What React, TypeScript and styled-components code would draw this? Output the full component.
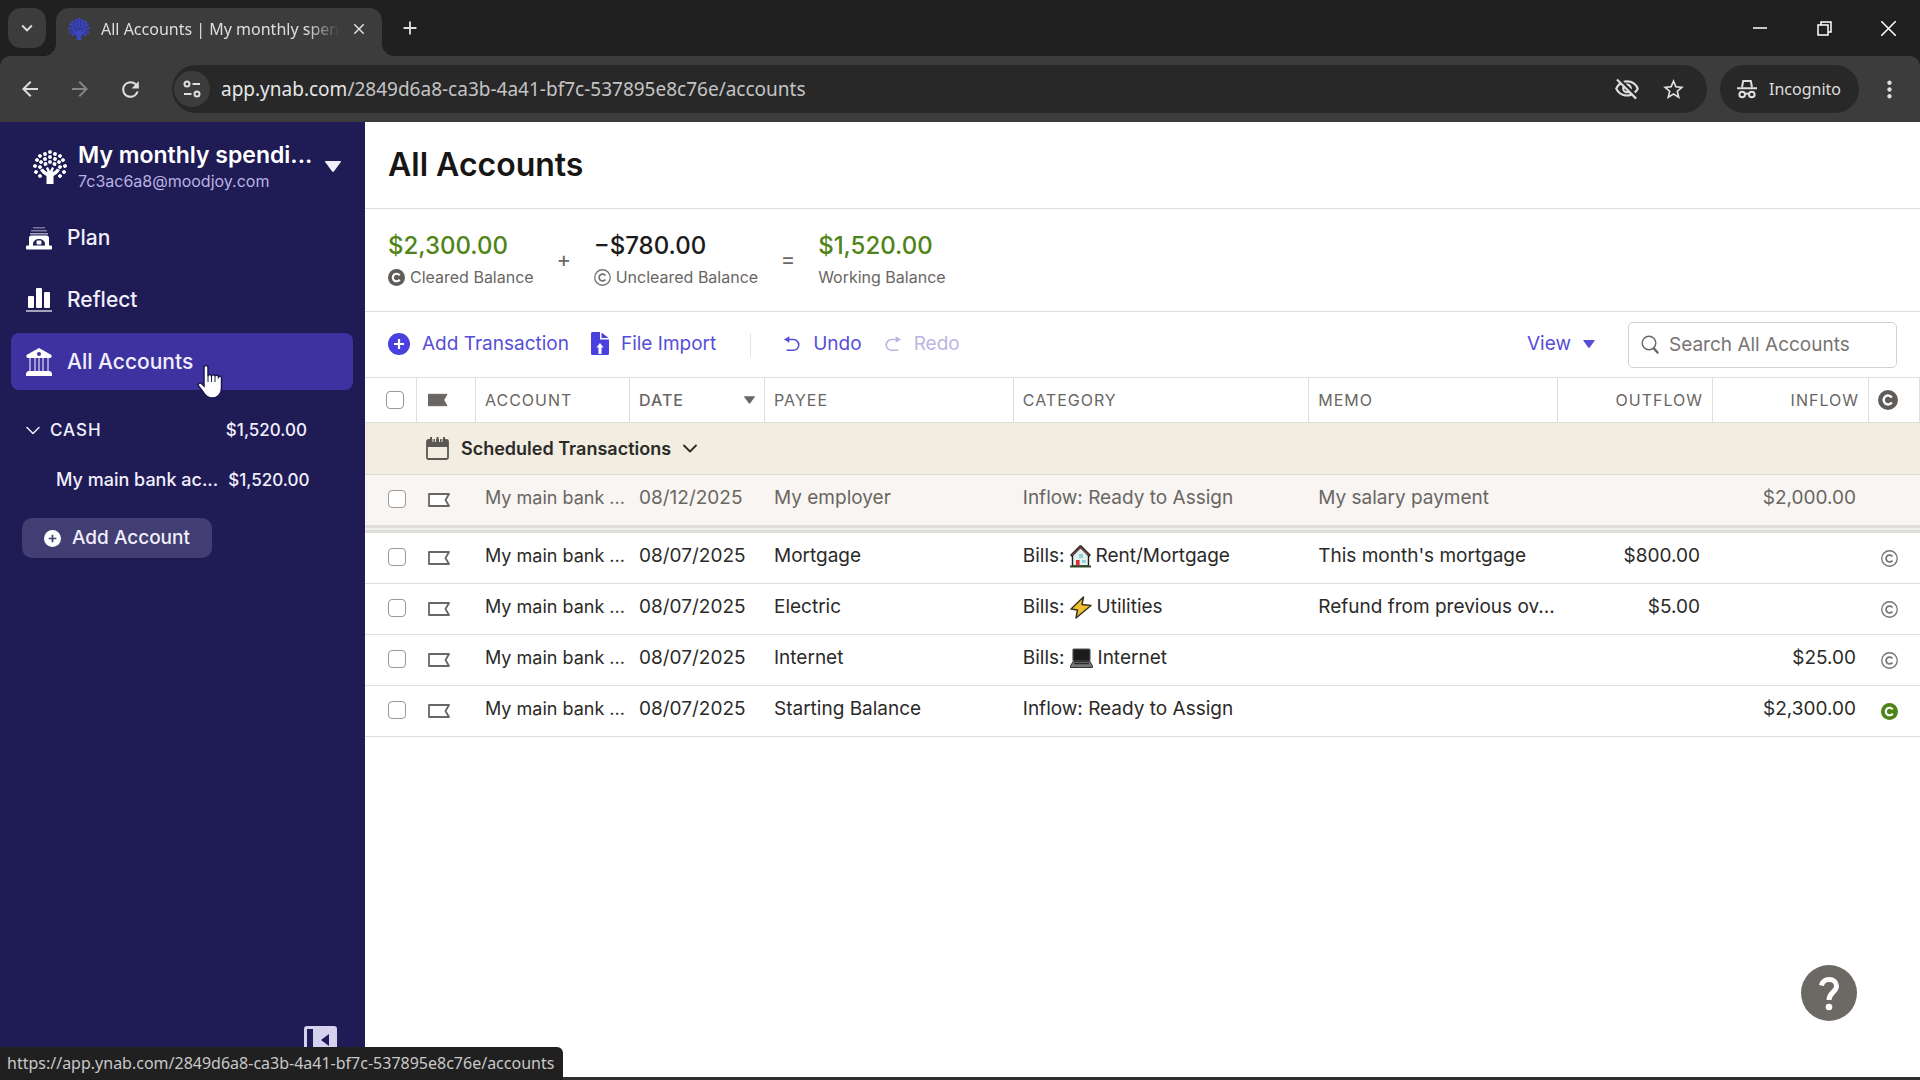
import React from "react";
import styled, { createGlobalStyle } from "styled-components";
import {
  MdAdd,
  MdArrowBack,
  MdArrowForward,
  MdClose,
  MdExpandMore,
  MdMoreVert,
  MdOutlineVisibilityOff,
  MdRefresh,
  MdStarOutline,
} from "react-icons/md";

const color = {
  strip: "#202020",
  chrome: "#3c3c3c",
  pill: "#282828",
  chromeText: "#dedede",
  navy: "#1f1b55",
  navyActive: "#3e32a0",
  lavender: "#b9b2e2",
  link: "#564ed6",
  linkIcon: "#4a40e0",
  ink: "#2b2a28",
  muted: "#696663",
  line: "#dfdedd",
  green: "#4f8518",
};

const appFont = `Inter, "Noto Sans", sans-serif`;
const chromeFont = `"Noto Sans", "Open Sans", sans-serif`;

const GlobalStyle = createGlobalStyle`
  *, *::before, *::after { box-sizing: border-box; }
  body { margin: 0; background: #fff; font-family: ${appFont}; color: ${color.ink}; }
  button, input { font: inherit; color: inherit; margin: 0; }
  button { background: none; border: 0; padding: 0; cursor: pointer; }
  a { color: inherit; text-decoration: none; }
  svg { display: block; flex: none; }
`;

/* ---------- window ---------- */

const Window = styled.div`
  display: flex;
  flex-direction: column;
  height: 100vh;
  overflow: hidden;
`;

const TabStrip = styled.header`
  display: flex;
  align-items: flex-start;
  height: 56px;
  padding: 8px 0 0 8px;
  background: ${color.strip};
  color: ${color.chromeText};
  font-family: ${chromeFont};
`;

const TabMenuButton = styled.button`
  display: grid;
  place-items: center;
  width: 38px;
  height: 40px;
  border-radius: 13px;
  background: ${color.chrome};
`;

const Tab = styled.div`
  position: relative;
  display: flex;
  align-items: center;
  width: 326px;
  height: 48px;
  margin-left: 10px;
  padding: 0 14px 6px 12px;
  border-radius: 13px 13px 0 0;
  background: ${color.chrome};

  &::before,
  &::after {
    content: "";
    position: absolute;
    bottom: 0;
    width: 12px;
    height: 12px;
  }
  &::before {
    left: -12px;
    background: radial-gradient(circle at 0 0, transparent 12px, ${color.chrome} 12px);
  }
  &::after {
    right: -12px;
    background: radial-gradient(circle at 100% 0, transparent 12px, ${color.chrome} 12px);
  }
`;

const TabTitle = styled.span`
  flex: 1;
  margin: 0 6px 0 11px;
  white-space: nowrap;
  font-size: 16px;
  line-height: 24px;
  mask-image: linear-gradient(to right, #000 85%, transparent 98%);
`;

const StripButton = styled.button`
  display: grid;
  place-items: center;
  height: 40px;
  width: 56px;
`;

const WindowControls = styled.div`
  display: flex;
  margin-left: auto;
`;

const WindowButton = styled.button`
  display: grid;
  place-items: center;
  width: 64px;
  height: 40px;
`;

const AddressBar = styled.div`
  background: ${color.strip};
`;

const AddressBarInner = styled.div`
  display: flex;
  align-items: center;
  height: 66px;
  padding: 0 13px 0 5px;
  border-radius: 10px 10px 0 0;
  background: ${color.chrome};
  color: ${color.chromeText};
  font-family: ${chromeFont};
`;

const NavButton = styled.button<{ $dim?: boolean }>`
  display: grid;
  place-items: center;
  width: 50px;
  height: 40px;
  opacity: ${(p) => (p.$dim ? 0.45 : 1)};
`;

const UrlPill = styled.div`
  flex: 1;
  display: flex;
  align-items: center;
  gap: 21px;
  height: 48px;
  margin-left: 17px;
  padding: 0 21px 0 2px;
  border-radius: 24px;
  background: ${color.pill};
`;

const SiteInfo = styled.button`
  display: grid;
  place-items: center;
  width: 36px;
  height: 36px;
  border-radius: 50%;
  background: ${color.chrome};
`;

const Url = styled.span`
  flex: 1;
  margin-left: -10px;
  font-size: 19px;
  line-height: 28px;
  color: #c4c4c4;

  b {
    font-weight: 400;
    color: #e6e6e6;
  }
`;

const Incognito = styled.button`
  display: flex;
  align-items: center;
  gap: 12px;
  height: 48px;
  margin: 0 12px 0 13px;
  padding: 0 18px 0 17px;
  border-radius: 24px;
  background: ${color.pill};
  font-size: 16px;
`;

const MenuButton = styled.button`
  display: grid;
  place-items: center;
  width: 36px;
  height: 40px;
`;

/* ---------- sidebar ---------- */

const Body = styled.div`
  flex: 1;
  display: flex;
  min-height: 0;
  border-bottom: 3px solid #2d2d2d;
`;

const Sidebar = styled.aside`
  flex: none;
  display: flex;
  flex-direction: column;
  width: 365px;
  background: ${color.navy};
  color: #f1effc;
`;

const BudgetButton = styled.button`
  display: flex;
  align-items: center;
  gap: 11px;
  height: 87px;
  padding: 2px 24px 0 33px;
  text-align: left;
`;

const BudgetText = styled.span`
  flex: 1;
  display: flex;
  flex-direction: column;
  white-space: nowrap;
`;

const BudgetName = styled.span`
  font-size: 23px;
  line-height: 28px;
  font-weight: 600;
  color: #fff;
`;

const BudgetEmail = styled.span`
  font-size: 16px;
  line-height: 24px;
  color: ${color.lavender};
`;

const Nav = styled.nav`
  display: flex;
  flex-direction: column;
  gap: 5px;
  padding: 0 12px 0 11px;
`;

const NavLink = styled.a<{ $active?: boolean }>`
  display: flex;
  align-items: center;
  gap: 15px;
  height: 57px;
  padding: 0 15px;
  border-radius: 8px;
  background: ${(p) => (p.$active ? color.navyActive : "transparent")};
  font-size: 21px;
  line-height: 28px;
  font-weight: 500;
`;

const AccountGroup = styled.div`
  display: flex;
  flex-direction: column;
  padding: 15px 58px 0 26px;
`;

const AccountRow = styled.a<{ $child?: boolean }>`
  display: flex;
  align-items: center;
  gap: 10px;
  height: 50px;
  padding-left: ${(p) => (p.$child ? 30 : 0)}px;
  font-size: 18px;
  line-height: 24px;
  font-weight: 500;
  white-space: nowrap;
`;

const GroupName = styled.span`
  font-size: 17px;
  letter-spacing: 1px;
`;

const Amount = styled.span`
  margin-left: auto;
  font-size: 17px;
`;

const AddAccount = styled.button`
  display: flex;
  align-items: center;
  align-self: flex-start;
  gap: 11px;
  height: 40px;
  margin: 13px 0 0 22px;
  padding: 0 22px;
  border-radius: 10px;
  background: #423d72;
  font-size: 19px;
  line-height: 24px;
  font-weight: 500;
`;

const CollapseButton = styled.button`
  align-self: flex-end;
  margin: auto 28px 18px 0;
`;

/* ---------- content ---------- */

const Content = styled.main`
  flex: 1;
  min-width: 0;
  display: flex;
  flex-direction: column;
`;

const TitleBar = styled.div`
  display: flex;
  align-items: center;
  height: 87px;
  padding: 0 23px;
  border-bottom: 1px solid ${color.line};
`;

const Title = styled.h1`
  margin: 0;
  font-size: 32px;
  line-height: 40px;
  font-weight: 600;
  color: #171615;
`;

const Balances = styled.section`
  display: flex;
  align-items: center;
  height: 103px;
  padding: 0 23px;
  border-bottom: 1px solid ${color.line};
`;

const Balance = styled.div`
  display: flex;
  flex-direction: column;
  gap: 4px;
`;

const BalanceAmount = styled.span<{ $positive?: boolean }>`
  font-size: 24px;
  line-height: 30px;
  font-weight: 500;
  color: ${(p) => (p.$positive ? color.green : "#1c1b1a")};
`;

const BalanceLabel = styled.span`
  display: flex;
  align-items: center;
  gap: 5px;
  font-size: 16px;
  line-height: 24px;
  color: ${color.muted};
`;

const Operator = styled.span`
  width: 60px;
  padding-bottom: 3px;
  text-align: center;
  font-size: 22px;
  line-height: 28px;
  color: ${color.muted};
`;

const Toolbar = styled.div`
  display: flex;
  align-items: center;
  height: 65px;
  padding: 0 23px;
  color: ${color.link};
  font-size: 19px;
  line-height: 24px;
`;

const ToolButton = styled.button<{ $space: number }>`
  display: flex;
  align-items: center;
  gap: 12px;
  margin: 0 ${(p) => p.$space}px 2px 0;

  &:disabled {
    color: #b9b6e2;
  }
`;

const Divider = styled.span`
  width: 1px;
  height: 24px;
  margin-right: 32px;
  background: #e4e3e2;
`;

const ViewButton = styled.button`
  display: flex;
  align-items: center;
  gap: 12px;
  margin: 0 33px 2px auto;
`;

const SearchBox = styled.label`
  display: flex;
  align-items: center;
  gap: 10px;
  width: 269px;
  height: 46px;
  padding: 0 12px;
  border: 1px solid #d3d1cf;
  border-radius: 5px;
  color: ${color.muted};

  input {
    flex: 1;
    min-width: 0;
    border: 0;
    padding: 0;
    outline: 0;
    background: none;
  }
  input::placeholder {
    color: #777471;
    opacity: 1;
  }
`;

/* ---------- register ---------- */

const Register = styled.table`
  width: 100%;
  table-layout: fixed;
  border-collapse: separate;
  border-spacing: 0;
  font-size: 19px;
  line-height: 24px;
`;

const HeadCell = styled.th<{ $right?: boolean; $sorted?: boolean }>`
  height: 46px;
  padding: 0 9px;
  border: 1px solid ${color.line};
  border-left: 0;
  text-align: ${(p) => (p.$right ? "right" : "left")};
  font-size: 16px;
  font-weight: ${(p) => (p.$sorted ? 500 : 400)};
  letter-spacing: 1px;
  color: ${color.muted};
  white-space: nowrap;
`;

const HeadFlagCell = styled(HeadCell)`
  padding-left: 11px;
`;

const SortButton = styled.button`
  display: flex;
  align-items: center;
  justify-content: space-between;
  width: 100%;
  letter-spacing: inherit;
`;

const Row = styled.tr<{ $scheduled?: boolean }>`
  background: ${(p) => (p.$scheduled ? "#f8f5f2" : "#fff")};
  color: ${(p) => (p.$scheduled ? color.muted : color.ink)};
`;

const Cell = styled.td<{ $right?: boolean; $plain?: boolean }>`
  height: ${(p) => (p.$plain ? 50 : 51)}px;
  padding: 0 ${(p) => (p.$right ? 13 : 0)}px 4px 9px;
  border-bottom: ${(p) => (p.$plain ? "0" : `1px solid ${color.line}`)};
  text-align: ${(p) => (p.$right ? "right" : "left")};
  white-space: nowrap;
`;

const AccountCell = styled(Cell)`
  font-size: 18px;
`;

const IconCell = styled(Cell)`
  padding: 0 0 0 11px;

  button {
    display: block;
    padding-left: 1px;
  }
`;

const CheckCell = styled(Cell)`
  padding: 0 0 2px 23px;
`;

const Checkbox = styled.input`
  appearance: none;
  display: block;
  width: 18px;
  height: 18px;
  border: 1px solid #9b9895;
  border-radius: 4px;
  background: #fff;
`;

const HeadCheckbox = styled(Checkbox)`
  margin-left: 12px;
`;

const SectionCell = styled.th`
  height: 52px;
  padding: 0 0 0 61px;
  border-bottom: 1px solid #e0dccf;
  background: #f1ede0;
  text-align: left;
`;

const SectionButton = styled.button`
  display: flex;
  align-items: center;
  gap: 12px;
  font-weight: 600;
  font-size: 18px;
`;

const SeparatorCell = styled.td`
  height: 8px;
  padding: 0;
  border: solid #e0dedb;
  border-width: 3px 0;
  background: #f0efed;
`;

const Category = styled.span`
  display: flex;
  align-items: center;
  gap: 5px;
`;

/* ---------- overlays ---------- */

const HelpButton = styled.button`
  position: fixed;
  right: 63px;
  bottom: 59px;
`;

const StatusBubble = styled.div`
  position: fixed;
  left: 0;
  bottom: 0;
  height: 33px;
  padding: 4px 9px 0 7px;
  border-radius: 0 6px 0 0;
  background: #202020;
  color: #c9c9c9;
  font-family: ${chromeFont};
  font-size: 16px;
  line-height: 24px;
`;

const Pointer = styled.svg`
  position: fixed;
  left: 196px;
  top: 364px;
`;

/* ---------- drawings ---------- */

const leaves: [number, number][] = [
  [17, 2], [12, 4], [22, 4], [7, 6], [27, 6], [17, 7], [4, 10], [12, 9], [22, 9], [30, 10],
  [8, 12], [26, 12], [17, 12], [2, 16], [12.5, 14], [21.5, 14], [32, 16],
  [3, 22], [7, 17], [27, 17], [31, 22], [7, 26], [27, 26],
];

const TreeIcon = ({ size = 34, fill = "#fff", crown }: { size?: number; fill?: string; crown?: string }) => (
  <svg width={size} height={size} viewBox="0 0 34 34" fill={fill} aria-hidden>
    {crown && <circle cx="17" cy="15" r="14" fill={crown} />}
    {leaves.map(([x, y]) => (
      <rect key={`${x}-${y}`} x={x - 1.8} y={y - 1.8} width="3.600" height="3.600" rx="1.200" transform={`rotate(${(x - 17) * 4} ${x} ${y})`} />
    ))}
    <path d="M13.500 34v-8c-2-1-5-3-6.500-6l3-1.500c1.500 2 3.500 3.500 4.500 3.500l-1.500-4 2-1 2 4 2-4 2 1-1.500 4c1 0 3-1.500 4.500-3.500l3 1.500c-1.500 3-4.500 5-6.500 6v8z" />
  </svg>
);

const PlanIcon = () => (
  <svg width="26" height="26" viewBox="0 0 26 26" fill="#fff" aria-hidden>
    <rect x="7" y="2" width="12" height="1.500" opacity=".4" />
    <rect x="5" y="5" width="16" height="1.500" opacity=".45" />
    <rect x="4" y="8" width="18" height="1.500" opacity=".6" />
    <path d="M3 21v-8a2.500 2.500 0 0 1 2.500-2.500h15A2.500 2.500 0 0 1 23 13v8h-4v-2a6 5 0 0 0-12 0v2z" />
    <rect x="10.500" y="15.500" width="5" height="4" rx="1" />
    <rect y="20.500" width="26" height="4" rx="1" />
  </svg>
);

const ReflectIcon = () => (
  <svg width="26" height="26" viewBox="0 0 26 26" fill="#fff" aria-hidden>
    <rect x="2" y="9" width="6" height="12" rx="1" />
    <rect x="10" y="1" width="6" height="20" rx="1" />
    <rect x="18" y="5" width="6" height="16" rx="1" />
    <rect y="23" width="26" height="2" opacity=".6" />
  </svg>
);

const BankIcon = () => (
  <svg width="26" height="28" viewBox="0 0 26 28" fill="#fff" aria-hidden>
    <path fillRule="evenodd" d="M13 0 25.500 7q.5 3-1.500 3H2Q0 10 .5 7zM13 4a2 2 0 1 0 0 4 2 2 0 0 0 0-4z" />
    {[3, 8, 12, 16, 21].map((x) => (
      <rect key={x} x={x} y="10" width="2" height="13" opacity=".5" />
    ))}
    <path d="M2 23h22l2 2v3H0v-3z" />
  </svg>
);

const PlusCircle = ({ size, fill, cross }: { size: number; fill: string; cross: string }) => (
  <svg width={size} height={size} viewBox="0 0 22 22" aria-hidden>
    <circle cx="11" cy="11" r="11" fill={fill} />
    <path d="M11 6v10M6 11h10" stroke={cross} strokeWidth="2.200" />
  </svg>
);

const Caret = ({ width, height }: { width: number; height: number }) => (
  <svg width={width} height={height} viewBox="0 0 16 11" fill="currentColor" aria-hidden>
    <path d="M1 0h14q1.500 0 .7 1.200L9 10.300q-1 1.200-2 0L.3 1.200Q-.5 0 1 0z" />
  </svg>
);

const Chevron = ({ width, thick = 1.8 }: { width: number; thick?: number }) => (
  <svg width={width} height={(width * 9) / 14} viewBox="0 0 14 9" fill="none" stroke="currentColor" strokeWidth={thick} aria-hidden>
    <path d="m1 1.500 6 6 6-6" strokeLinecap="round" strokeLinejoin="round" />
  </svg>
);

const ClearedIcon = ({ size = 17, fill = "#5f5c59" }: { size?: number; fill?: string }) => (
  <svg width={size} height={size} viewBox="0 0 18 18" aria-hidden>
    <circle cx="9" cy="9" r="9" fill={fill} />
    <path d="M12.400 6.800A4 4 0 1 0 12.400 11.200" fill="none" stroke="#fff" strokeWidth="2.200" />
  </svg>
);

const UnclearedIcon = ({ size = 17 }: { size?: number }) => (
  <svg width={size} height={size} viewBox="0 0 18 18" fill="none" stroke="#77736f" aria-hidden>
    <circle cx="9" cy="9" r="8.200" strokeWidth="1.400" />
    <path d="M12 7A3.600 3.600 0 1 0 12 11" strokeWidth="1.900" />
  </svg>
);

const FlagIcon = ({ solid }: { solid?: boolean }) => (
  <svg
    width={solid ? 20 : 23}
    height={solid ? 14 : 16}
    viewBox={solid ? "1 1 21 14" : "0 0 23 16"}
    fill={solid ? color.muted : "#fff"}
    stroke={color.muted}
    strokeWidth={solid ? 1 : 1.8}
    aria-hidden
  >
    <path d="M1 2h20l-3.500 6 3.500 6H1z" strokeLinejoin="round" />
  </svg>
);

const FileIcon = () => (
  <svg width="18" height="23" viewBox="0 0 18 23" fill={color.linkIcon} aria-hidden>
    <path d="M1.500 0H9v7.500h9V21.500a1.500 1.500 0 0 1-1.500 1.500h-15A1.500 1.500 0 0 1 0 21.500v-20A1.500 1.500 0 0 1 1.500 0z" />
    <path d="M10.500.5 17.500 6h-7z" />
    <path d="m9 11 3.500 4.500h-2V22h-3v-6.500h-2z" fill="#fff" />
  </svg>
);

const TurnIcon = ({ flip }: { flip?: boolean }) => (
  <svg width="18" height="18" viewBox="0 0 18 20" aria-hidden>
    <g transform={flip ? "matrix(-1 0 0 1 18 0)" : undefined}>
      <path d="M3 5h7.500a6 6 0 0 1 0 12H3" fill="none" stroke="currentColor" strokeWidth="1.800" />
      <path d="M6 1.500v7L0 5z" fill="currentColor" />
    </g>
  </svg>
);

const SearchIcon = () => (
  <svg width="18" height="19" viewBox="0 0 18 19" fill="none" stroke="currentColor" aria-hidden>
    <circle cx="8" cy="8" r="6.800" strokeWidth="1.400" />
    <path d="m13 13.500 3.500 4" strokeWidth="2.400" strokeLinecap="round" />
  </svg>
);

const CalendarIcon = () => (
  <svg width="23" height="23" viewBox="0 0 23 23" aria-hidden>
    <path d="M1 3h21v7H1z" fill="#5b5853" />
    <rect x="1" y="3" width="21" height="19" rx="1.500" fill="none" stroke="#5b5853" strokeWidth="1.800" />
    <path d="M5 0v5M11.500 0v5M18 0v5" stroke="#5b5853" strokeWidth="2" />
    <path d="M7 2v3M13.500 2v3M16 2v3M9.500 2v3" stroke="#f1ede0" strokeWidth="1" />
  </svg>
);

const HouseIcon = () => (
  <svg width="21" height="23" viewBox="0 0 21 23" aria-hidden>
    <path d="M2.500 9.500 10.500 2l8 7.500V21h-16z" fill="#e3f1ee" stroke="#23211f" strokeWidth="1.400" />
    <path d="M1 11 10.500 1.500 20 11" fill="none" stroke="#23211f" strokeWidth="2.800" strokeLinejoin="round" />
    <path d="M2 10.200 10.500 2 19 10.200" fill="none" stroke="#d8576b" strokeWidth=".9" />
    <rect x="6" y="15" width="3.600" height="6" fill="#d3303a" />
    <rect x="9" y="9" width="4" height="4" fill="#8fd0d8" />
    <rect x="12" y="15" width="3.600" height="3" fill="#8fd0d8" />
    <path d="M0 21.500h21" stroke="#2e4a2a" strokeWidth="2" />
  </svg>
);

const BoltIcon = () => (
  <svg width="22" height="23" viewBox="0 0 22 23" aria-hidden>
    <path d="M13.500 1 1 13l6.500 1-1.500 8L21 9.500 12 8.500z" fill="#eebf2e" stroke="#3a3320" strokeWidth="1.500" strokeLinejoin="round" />
  </svg>
);

const LaptopIcon = () => (
  <svg width="23" height="20" viewBox="0 0 23 20" aria-hidden>
    <rect x="3" y="1" width="17" height="12" rx="1" fill="#1b1b1b" stroke="#555" strokeWidth="1.200" />
    <path d="M3 13.500h17l2.500 4.500v1.500H.5V18z" fill="#77777a" stroke="#333" strokeWidth="1" />
    <path d="M4 15.500h15" stroke="#2a2a2a" strokeWidth="1.500" />
  </svg>
);

const CollapseIcon = () => (
  <svg width="33" height="33" viewBox="0 0 33 33" aria-hidden>
    <rect width="33" height="33" rx="3" fill="#d6d1ee" />
    <rect x="3" y="3" width="6" height="27" fill={color.navy} />
    <path d="M25 8v12l-8-6z" fill={color.navy} />
  </svg>
);

const TuneIcon = () => (
  <svg width="18" height="18" viewBox="0 0 18 18" fill="none" stroke="currentColor" strokeWidth="2" aria-hidden>
    <circle cx="4" cy="4" r="2.500" />
    <path d="M9.500 4H17M1 14h7.500" />
    <circle cx="14" cy="14" r="2.500" />
  </svg>
);

const IncognitoIcon = () => (
  <svg width="20" height="20" viewBox="0 0 20 20" fill="none" stroke="currentColor" strokeWidth="2" aria-hidden>
    <path d="M5 8 6.200 2h7.600L15 8M0 9.200h20" />
    <circle cx="5.200" cy="15.500" r="2.800" />
    <circle cx="14.800" cy="15.500" r="2.800" />
    <path d="M8 15.200q2-1.200 4 0" />
  </svg>
);

const HelpIcon = () => (
  <svg width="56" height="56" viewBox="0 0 56 56" aria-hidden>
    <circle cx="28" cy="28" r="28" fill="#6c6965" />
    <path d="M20.500 20.500c.8-4 4-6 7.500-6 4.500 0 7.500 2.700 7.500 6.500 0 6-7.500 6.500-7.500 14" fill="none" stroke="#fff" strokeWidth="5" />
    <circle cx="28" cy="42" r="3.300" fill="#fff" />
  </svg>
);

/* ---------- data ---------- */

type Transaction = {
  date: string;
  payee: string;
  category: string;
  icon?: React.ReactNode;
  memo?: string;
  outflow?: string;
  inflow?: string;
  status?: "cleared" | "uncleared";
};

const scheduled: Transaction = {
  date: "08/12/2025",
  payee: "My employer",
  category: "Inflow: Ready to Assign",
  memo: "My salary payment",
  inflow: "$2,000.00",
};

const transactions: Transaction[] = [
  { date: "08/07/2025", payee: "Mortgage", category: "Rent/Mortgage", icon: <HouseIcon />, memo: "This month's mortgage", outflow: "$800.00", status: "uncleared" },
  { date: "08/07/2025", payee: "Electric", category: "Utilities", icon: <BoltIcon />, memo: "Refund from previous ov...", outflow: "$5.00", status: "uncleared" },
  { date: "08/07/2025", payee: "Internet", category: "Internet", icon: <LaptopIcon />, inflow: "$25.00", status: "uncleared" },
  { date: "08/07/2025", payee: "Starting Balance", category: "Inflow: Ready to Assign", inflow: "$2,300.00", status: "cleared" },
];

const columns = ["52px", "59px", "154px", "135px", "16%", "19%", "16%", "155px", "156px", "50px", "1px"];

const TransactionRow = ({ item, isScheduled }: { item: Transaction; isScheduled?: boolean }) => (
  <Row $scheduled={isScheduled}>
    <CheckCell $plain={isScheduled}>
      <Checkbox type="checkbox" aria-label={`Select ${item.payee}`} />
    </CheckCell>
    <IconCell $plain={isScheduled}>
      <FlagIcon />
    </IconCell>
    <AccountCell $plain={isScheduled}>My main bank ...</AccountCell>
    <Cell $plain={isScheduled}>{item.date}</Cell>
    <Cell $plain={isScheduled}>{item.payee}</Cell>
    <Cell $plain={isScheduled}>
      {item.icon ? (
        <Category>
          Bills: {item.icon} {item.category}
        </Category>
      ) : (
        item.category
      )}
    </Cell>
    <Cell $plain={isScheduled}>{item.memo}</Cell>
    <Cell $plain={isScheduled} $right>{item.outflow}</Cell>
    <Cell $plain={isScheduled} $right>{item.inflow}</Cell>
    <IconCell $plain={isScheduled} colSpan={2}>
      {item.status && (
        <button type="button" aria-label={item.status}>
          {item.status === "cleared" ? <ClearedIcon fill={color.green} /> : <UnclearedIcon />}
        </button>
      )}
    </IconCell>
  </Row>
);

export default function App() {
  return (
    <>
      <GlobalStyle />
      <Window>
        <TabStrip>
          <TabMenuButton aria-label="Search tabs">
            <MdExpandMore size={22} />
          </TabMenuButton>
          <Tab>
            <TreeIcon size={22} fill="#3f46c4" crown="#343a8f" />
            <TabTitle>All Accounts | My monthly spen</TabTitle>
            <button type="button" aria-label="Close tab">
              <MdClose size={18} />
            </button>
          </Tab>
          <StripButton aria-label="New tab">
            <MdAdd size={22} />
          </StripButton>
          <WindowControls>
            <WindowButton aria-label="Minimize">
              <svg width="14" height="14" stroke="#fff" strokeWidth="1.500" aria-hidden>
                <path d="M0 7h14" />
              </svg>
            </WindowButton>
            <WindowButton aria-label="Restore">
              <svg width="15" height="15" stroke="#fff" strokeWidth="1.500" fill="none" aria-hidden>
                <path d="M1 4h10v10H1zM4 4V1h10v10h-3" />
              </svg>
            </WindowButton>
            <WindowButton aria-label="Close">
              <svg width="15" height="15" stroke="#fff" strokeWidth="1.500" aria-hidden>
                <path d="m0 0 15 15M15 0 0 15" />
              </svg>
            </WindowButton>
          </WindowControls>
        </TabStrip>

        <AddressBar>
          <AddressBarInner>
            <NavButton aria-label="Back"><MdArrowBack size={24} /></NavButton>
            <NavButton aria-label="Forward" $dim><MdArrowForward size={24} /></NavButton>
            <NavButton aria-label="Reload"><MdRefresh size={25} /></NavButton>
            <UrlPill>
              <SiteInfo aria-label="Site information"><TuneIcon /></SiteInfo>
              <Url><b>app.ynab.com</b>/2849d6a8-ca3b-4a41-bf7c-537895e8c76e/accounts</Url>
              <button type="button" aria-label="Third-party cookies blocked"><MdOutlineVisibilityOff size={26} /></button>
              <button type="button" aria-label="Bookmark"><MdStarOutline size={25} /></button>
            </UrlPill>
            <Incognito>
              <IncognitoIcon />
              Incognito
            </Incognito>
            <MenuButton aria-label="Menu"><MdMoreVert size={27} /></MenuButton>
          </AddressBarInner>
        </AddressBar>

        <Body>
          <Sidebar>
            <BudgetButton>
              <TreeIcon />
              <BudgetText>
                <BudgetName>My monthly spendi...</BudgetName>
                <BudgetEmail>7c3ac6a8@moodjoy.com</BudgetEmail>
              </BudgetText>
              <Caret width={16} height={11} />
            </BudgetButton>
            <Nav>
              <NavLink href="#plan"><PlanIcon />Plan</NavLink>
              <NavLink href="#reflect"><ReflectIcon />Reflect</NavLink>
              <NavLink href="#accounts" $active><BankIcon />All Accounts</NavLink>
            </Nav>
            <AccountGroup>
              <AccountRow href="#cash">
                <Chevron width={14} thick={1.5} />
                <GroupName>CASH</GroupName>
                <Amount>$1,520.00</Amount>
              </AccountRow>
              <AccountRow href="#main" $child>
                My main bank ac...
                <Amount>$1,520.00</Amount>
              </AccountRow>
            </AccountGroup>
            <AddAccount>
              <PlusCircle size={17} fill="#fff" cross="#423d72" />
              Add Account
            </AddAccount>
            <CollapseButton aria-label="Collapse sidebar">
              <CollapseIcon />
            </CollapseButton>
          </Sidebar>

          <Content>
            <TitleBar>
              <Title>All Accounts</Title>
            </TitleBar>
            <Balances>
              <Balance>
                <BalanceAmount $positive>$2,300.00</BalanceAmount>
                <BalanceLabel><ClearedIcon />Cleared Balance</BalanceLabel>
              </Balance>
              <Operator>+</Operator>
              <Balance>
                <BalanceAmount>−$780.00</BalanceAmount>
                <BalanceLabel><UnclearedIcon />Uncleared Balance</BalanceLabel>
              </Balance>
              <Operator>=</Operator>
              <Balance>
                <BalanceAmount $positive>$1,520.00</BalanceAmount>
                <BalanceLabel>Working Balance</BalanceLabel>
              </Balance>
            </Balances>
            <Toolbar>
              <ToolButton $space={22}><PlusCircle size={22} fill={color.linkIcon} cross="#fff" />Add Transaction</ToolButton>
              <ToolButton $space={34}><FileIcon />File Import</ToolButton>
              <Divider />
              <ToolButton $space={22}><TurnIcon />Undo</ToolButton>
              <ToolButton $space={0} disabled><TurnIcon flip />Redo</ToolButton>
              <ViewButton>View <Caret width={12} height={8} /></ViewButton>
              <SearchBox>
                <SearchIcon />
                <input type="search" placeholder="Search All Accounts" aria-label="Search All Accounts" />
              </SearchBox>
            </Toolbar>
            <Register>
              <colgroup>
                {columns.map((width, i) => (
                  <col key={i} style={{ width }} />
                ))}
              </colgroup>
              <thead>
                <tr>
                  <HeadCell>
                    <HeadCheckbox type="checkbox" aria-label="Select all" />
                  </HeadCell>
                  <HeadFlagCell aria-label="Flag"><FlagIcon solid /></HeadFlagCell>
                  <HeadCell>ACCOUNT</HeadCell>
                  <HeadCell $sorted>
                    <SortButton>DATE <Caret width={11} height={8} /></SortButton>
                  </HeadCell>
                  <HeadCell>PAYEE</HeadCell>
                  <HeadCell>CATEGORY</HeadCell>
                  <HeadCell>MEMO</HeadCell>
                  <HeadCell $right>OUTFLOW</HeadCell>
                  <HeadCell $right>INFLOW</HeadCell>
                  <HeadCell colSpan={2} aria-label="Cleared"><ClearedIcon size={20} /></HeadCell>
                </tr>
              </thead>
              <tbody>
                <tr>
                  <SectionCell colSpan={11}>
                    <SectionButton>
                      <CalendarIcon />
                      Scheduled Transactions
                      <Chevron width={14} />
                    </SectionButton>
                  </SectionCell>
                </tr>
                <TransactionRow item={scheduled} isScheduled />
                <tr>
                  <SeparatorCell colSpan={11} />
                </tr>
                {transactions.map((item) => (
                  <TransactionRow key={item.payee} item={item} />
                ))}
              </tbody>
            </Register>
          </Content>
        </Body>
      </Window>

      <HelpButton aria-label="Help"><HelpIcon /></HelpButton>
      <StatusBubble>https://app.ynab.com/2849d6a8-ca3b-4a41-bf7c-537895e8c76e/accounts</StatusBubble>
      <Pointer width="28" height="36" viewBox="0 0 28 36" aria-hidden>
        <path
          d="M8 3.500a2 2 0 0 1 4 0V12a1.800 1.800 0 0 1 3.500 0 1.800 1.800 0 0 1 3.500.5 1.800 1.800 0 0 1 3.500.5 1.600 1.600 0 0 1 3 .5V24c0 6-4 10-9 10-4 0-7-2-9-5.500L2.500 22c-1-2 1-4 3-2.500L8 22z"
          fill="#fff"
          stroke="#1c1950"
          strokeWidth="1.500"
        />
        <path d="M12 12v6M15.500 12v6M19 13v5" stroke="#1c1950" strokeWidth="1" />
      </Pointer>
    </>
  );
}
